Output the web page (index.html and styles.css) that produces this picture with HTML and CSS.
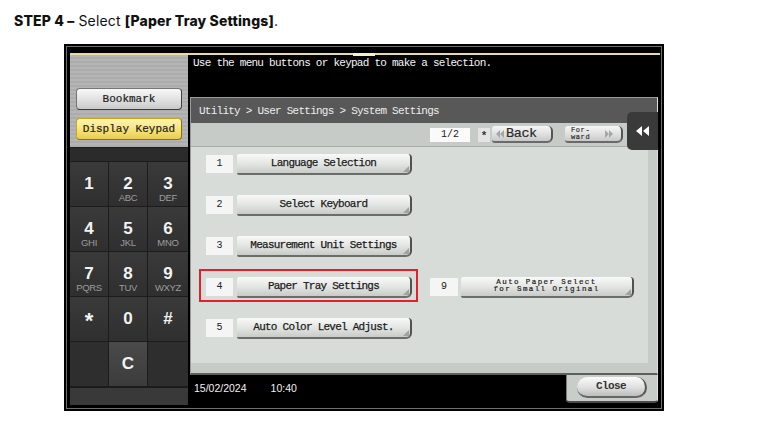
FILE: index.html
```html
<!DOCTYPE html>
<html lang="en">
<head>
<meta charset="utf-8">
<title>Paper Tray Settings</title>
<link rel="stylesheet" href="styles.css">
</head>
<body>
<h1 class="step"><b>STEP 4 –</b> Select <b>[Paper Tray Settings]</b>.</h1>

<div class="device">
  <div class="rim"><span class="rim-tab"></span></div>
  <div class="screen">
    <aside class="side">
      <div class="side-top">
        <div class="side-btn">Bookmark</div>
        <div class="side-btn yellow">Display Keypad</div>
      </div>
      <div class="pad-gap"></div>
      <div class="keypad">
        <div class="key"><span class="d">1</span></div>
        <div class="key"><span class="d">2</span><span class="l">ABC</span></div>
        <div class="key"><span class="d">3</span><span class="l">DEF</span></div>
        <div class="key"><span class="d">4</span><span class="l">GHI</span></div>
        <div class="key"><span class="d">5</span><span class="l">JKL</span></div>
        <div class="key"><span class="d">6</span><span class="l">MNO</span></div>
        <div class="key"><span class="d">7</span><span class="l">PQRS</span></div>
        <div class="key"><span class="d">8</span><span class="l">TUV</span></div>
        <div class="key"><span class="d">9</span><span class="l">WXYZ</span></div>
        <div class="key"><span class="d star-key">*</span></div>
        <div class="key"><span class="d">0</span></div>
        <div class="key"><span class="d">#</span></div>
        <div class="key blank"></div>
        <div class="key c"><span class="d">C</span></div>
        <div class="key blank"></div>
      </div>
      <div class="side-foot"></div>
    </aside>

    <main class="main">
      <p class="msg">Use the menu buttons or keypad to make a selection.</p>
      <section class="panel">
        <div class="crumb">Utility &gt; User Settings &gt; System Settings</div>
        <div class="toolbar">
          <span class="page">1/2</span>
          <span class="star">*</span>
          <span class="nav back">
            <svg width="8" height="8" viewBox="0 0 8 8"><path d="M4 0v8L0 4zM8 0v8L4 4z" fill="#a3a7a9"/></svg>
            <span>Back</span>
          </span>
          <span class="nav fwd">
            <span class="fw">For-<br>ward</span>
            <svg width="8" height="8" viewBox="0 0 8 8"><path d="M0 0v8l4-4zM4 0v8l4-4z" fill="#a3a7a9"/></svg>
          </span>
        </div>
        <div class="menu">
          <div class="item"><span class="num">1</span><span class="btn">Language Selection</span></div>
          <div class="item"><span class="num">2</span><span class="btn">Select Keyboard</span></div>
          <div class="item"><span class="num">3</span><span class="btn">Measurement Unit Settings</span></div>
          <div class="item"><span class="num">4</span><span class="btn">Paper Tray Settings</span><span class="hl"></span></div>
          <div class="item"><span class="num">5</span><span class="btn">Auto Color Level Adjust.</span></div>
          <div class="item r9"><span class="num">9</span><span class="btn two">Auto Paper Select<br>for Small Original</span></div>
        </div>
        <div class="collapse">
          <svg width="13" height="10" viewBox="0 0 13 10"><path d="M6 0v10L0 5zM13 0v10L7 5z" fill="#fff"/></svg>
        </div>
      </section>
      <footer class="status">
        <span class="date">15/02/2024</span>
        <span class="time">10:40</span>
        <div class="close-tab"><span class="close">Close</span></div>
      </footer>
    </main>
  </div>
</div>
</body>
</html>
```

FILE: styles.css
```css
* { box-sizing: border-box; }

body {
  margin: 0;
  background: #fff;
  width: 758px;
  height: 421px;
  overflow: hidden;
}

/* instruction heading */
.step {
  margin: 0;
  height: 29px;
  padding: 12px 0 0 14px;
  font: 400 14px/17px "Inter", "Open Sans", sans-serif;
  letter-spacing: 0.15px;
  color: #111;
}
.step b { font-weight: 800; }

/* control panel photo frame */
.device {
  margin: 15px 0 0 64px;
  width: 600px;
  height: 367px;
  background: #000;
  padding: 9px 4px 6px 6px;
  box-shadow: inset 0 0 0 2px #000, inset 0 0 0 3px #6e6e6e;
  display: flex;
  flex-direction: column;
}

.rim {
  height: 2px;
  background: #e4dca4;
  display: flex;
}
.rim-tab {
  margin-left: 283px;
  width: 22px;
  height: 3px;
  background: #f3efd2;
}

.screen {
  flex: 1;
  display: flex;
  min-height: 0;
}

/* left column: shortcut buttons and keypad */
.side {
  width: 118px;
  display: flex;
  flex-direction: column;
}
.side-top {
  height: 93px;
  padding: 33px 6px 0;
  display: flex;
  flex-direction: column;
  gap: 8px;
  background: repeating-linear-gradient(#b5b5b5 0 2px, #acacac 2px 4px);
  border-bottom: 1px solid #1e1e1e;
}
.side-btn {
  height: 22px;
  border-radius: 4px;
  border: 1px solid #767676;
  border-right-color: #3d3d3d;
  border-bottom-color: #3d3d3d;
  background: linear-gradient(#f8f8f8, #e0e0e0 55%, #c9c9c9);
  font: 11px/20px "Liberation Mono", monospace;
  -webkit-text-stroke: 0.2px #222;
  text-align: center;
  color: #222;
}
.side-btn.yellow {
  background: linear-gradient(#fff5b0, #f6e27a 55%, #e8cd52);
  border-color: #c9a818;
  border-right-color: #8e7200;
  border-bottom-color: #8e7200;
}

.pad-gap {
  height: 13px;
  background: #2b2b2b;
}
.keypad {
  display: grid;
  grid-template-columns: 39px 39px 40px;
  grid-auto-rows: 45px;
  border-top: 1px solid #1b1b1b;
}
.key {
  display: flex;
  flex-direction: column;
  align-items: center;
  padding-top: 12px;
  background: linear-gradient(#3a3a3a, #2f2f2f);
  border-right: 1px solid #1c1c1c;
  border-bottom: 1px solid #1c1c1c;
  color: #f2f2f2;
  font-family: "Liberation Sans", Arial, sans-serif;
}
.key:nth-child(3n) { border-right: none; }
.key.blank { background: #2e2e2e; }
.key.c { background: linear-gradient(#4a4a4a, #3c3c3c); }
.d {
  font-size: 17px;
  line-height: 19px;
  font-weight: 700;
}
.d.star-key { font-size: 22px; line-height: 22px; padding-top: 1px; }
.l {
  font-size: 9.5px;
  line-height: 10px;
  letter-spacing: -0.3px;
  color: #9c9c9c;
}
.side-foot {
  flex: 1;
  background: #393939;
  border-top: 1px solid #1a1a1a;
}

/* right side: message, settings panel, status line */
.main {
  flex: 1;
  display: flex;
  flex-direction: column;
  min-width: 0;
}
.msg {
  margin: 0;
  height: 42px;
  padding: 2px 0 0 5px;
  color: #f4f4f4;
  font: 11px/13px "Liberation Mono", monospace;
  letter-spacing: -0.75px;
  white-space: nowrap;
}

.panel {
  position: relative;
  margin: 0 2px;
  height: 278px;
  display: flex;
  flex-direction: column;
  border: 1px solid #9b9b9b;
  border-right-color: #dcdcdc;
  border-bottom: 2px solid #5e5e5e;
}
.crumb {
  flex: none;
  height: 25px;
  padding: 2px 0 0 8px;
  background: #585858;
  color: #ededed;
  font: 11px/23px "Liberation Mono", monospace;
  letter-spacing: -0.75px;
  white-space: nowrap;
}
.toolbar {
  flex: none;
  height: 24px;
  background: #c7cbc8;
  border-bottom: 1px solid #a9adaa;
  display: flex;
  align-items: center;
  padding-left: 239px;
}
.page {
  width: 40px;
  height: 14px;
  background: #fafafa;
  font: 10px/14px "Liberation Mono", monospace;
  text-align: center;
  color: #222;
}
.star {
  margin-left: 8px;
  width: 12px;
  height: 14px;
  background: #e4e4e4;
  font: bold 11px/16px "Liberation Mono", monospace;
  text-align: center;
  color: #333;
}
.nav {
  height: 17px;
  border-radius: 3px 5px 6px 3px;
  background: linear-gradient(#f6f6f6, #dddddd 60%, #c8c8c8);
  border-right: 2px solid #555;
  border-bottom: 2px solid #6a6a6a;
  display: flex;
  align-items: center;
}
.back {
  margin-left: 2px;
  width: 61px;
  padding-left: 4px;
  gap: 2px;
  font: 13.5px/15px "Liberation Mono", monospace;
  letter-spacing: -0.4px;
  -webkit-text-stroke: 0.2px #2a2a2a;
  color: #2a2a2a;
}
.fwd {
  margin-left: 12px;
  width: 58px;
  padding-left: 6px;
}
.fw {
  font: 7px/7px "Liberation Mono", monospace;
  letter-spacing: 0.6px;
  -webkit-text-stroke: 0.2px #333;
  color: #333;
}
.fwd svg { margin-left: auto; margin-right: 8px; }

.collapse {
  position: absolute;
  right: -1px;
  top: 14px;
  width: 31px;
  height: 38px;
  background: #3a3a3a;
  border-radius: 5px 0 0 5px;
  display: flex;
  align-items: center;
  justify-content: center;
}

.menu {
  flex: 1;
  background: #d7dcd8;
  box-shadow: inset -9px -10px 0 #c7cbc8;
  padding: 7px 0 0 15px;
  display: grid;
  grid-auto-flow: column;
  grid-template-rows: repeat(5, 21px);
  grid-template-columns: 206px 204px;
  row-gap: 20px;
  column-gap: 18px;
  align-content: start;
}
.item {
  position: relative;
  display: flex;
  gap: 4px;
}
.item.r9 {
  grid-column: 2;
  grid-row: 4;
  gap: 3px;
}
.num {
  flex: none;
  width: 27px;
  height: 18px;
  margin-top: 1px;
  background: #f4f5f4;
  font: 10px/18px "Liberation Mono", monospace;
  text-align: center;
  color: #222;
}
.r9 .num { width: 28px; }
.btn {
  flex: 1;
  position: relative;
  border-radius: 2px 4px 6px 2px;
  background: linear-gradient(#f8f9f8, #e4e6e4 50%, #c9cbc9);
  border-right: 2px solid #505250;
  border-bottom: 2px solid #6b6d6b;
  font: 11px/19px "Liberation Mono", monospace;
  letter-spacing: -0.75px;
  -webkit-text-stroke: 0.25px #1c1c1c;
  text-align: center;
  color: #1c1c1c;
  white-space: nowrap;
}
.btn::after {
  content: "";
  position: absolute;
  right: 1px;
  bottom: 1px;
  border-style: solid;
  border-width: 0 0 6px 6px;
  border-color: transparent transparent #a0a2a0 transparent;
}
.btn.two {
  font-size: 7.5px;
  line-height: 7px;
  padding-top: 2px;
  letter-spacing: 1.4px;
  -webkit-text-stroke: 0.2px #1c1c1c;
}
.hl {
  position: absolute;
  left: -7px;
  right: -6px;
  top: -8px;
  bottom: -4px;
  border: 2px solid #e21f2b;
}

.status {
  flex: 1;
  display: flex;
  align-items: flex-start;
  padding-left: 6px;
  color: #f0f0f0;
  font: 10.5px/12px "Liberation Sans", Arial, sans-serif;
}
.date { margin-top: 7px; }
.time { margin: 7px 0 0 24px; }
.close-tab {
  margin: -2px 2px 0 auto;
  width: 92px;
  height: 30px;
  background: #c9cdca;
  border-left: 1px solid #7a7a7a;
  border-right: 1px solid #e2e2e2;
  border-bottom: 2px solid #4a4a4a;
  border-radius: 0 0 4px 4px;
  display: flex;
  align-items: center;
  justify-content: center;
}
.close {
  width: 70px;
  height: 21px;
  border-radius: 11px;
  background: linear-gradient(#fbfbfb, #dfdfdf 55%, #bdbdbd);
  border-right: 2px solid #555;
  border-bottom: 2px solid #666;
  font: bold 11px/19px "Liberation Mono", monospace;
  letter-spacing: -0.6px;
  color: #333;
  text-align: center;
}
```
